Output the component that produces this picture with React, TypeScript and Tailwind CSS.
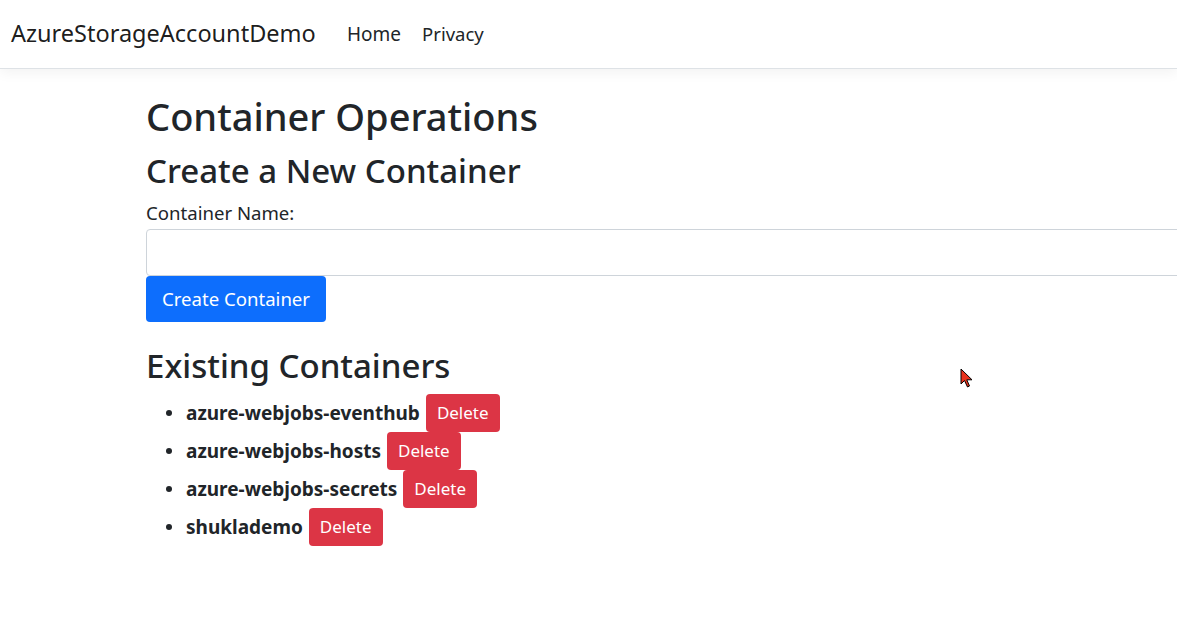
import React from "react";

const containers = ["azure-webjobs-eventhub", "azure-webjobs-hosts", "azure-webjobs-secrets", "shukla" + "demo"];

function Cursor() {
  return (
    <svg className="absolute left-[960px] top-[368px]" width="14" height="21" viewBox="0 0 14 21">
      <path d="M1 1 L1 16 L4.5 12.5 L7.5 19 L9.5 18 L6.8 11.8 L12 11.8 Z" fill="#e8321c" stroke="#000" strokeWidth="1" />
    </svg>
  );
}

export default function App() {
  return (
    <div className="relative w-full h-[622px] overflow-hidden bg-white text-[#212529]" style={{ fontFamily: '"Segoe UI", "Noto Sans", sans-serif' }}>
      <nav className="h-[69px] flex items-center border-b border-[#dee2e6] shadow-[0_4px_12px_rgba(0,0,0,0.05)] bg-white">
        <span className="ml-[11px] w-[305px] whitespace-nowrap text-[23.5px] text-black/90">AzureStorageAccountDemo</span>
        <a className="ml-[31px] text-[19px] text-[#212529]">Home</a>
        <a className="ml-[21px] text-[18.5px] text-[#212529]">Privacy</a>
      </nav>
      <main className="pl-[146px] pt-[22px]">
        <h1 className="text-[38px] leading-[50px] font-medium mb-[9px]">Container Operations</h1>
        <h2 className="text-[33px] leading-[41px] font-medium mb-[9px]">Create a New Container</h2>
        <label className="block text-[18.6px] leading-[26px] mb-[3px]">Container Name:</label>
        <input className="block w-[1100px] h-[47px] border border-[#ced4da] rounded-[4px] px-3 outline-none" />
        <button className="mt-[0px] h-[46px] w-[180px] rounded-[4px] bg-[#0d6efd] text-white text-[18.6px]">Create Container</button>
        <h2 className="mt-[23px] text-[33px] leading-[41px] font-medium mb-[8px]">Existing Containers</h2>
        <ul>
          {containers.map((name) => (
            <li key={name} className="flex items-center h-[38px]">
              <span className="ml-[20px] w-[6px] h-[6px] rounded-full bg-[#212529]" />
              <strong className="ml-[14px] text-[19px] font-bold">{name}</strong>
              <button className="ml-[6px] h-[38px] px-[11px] rounded-[4px] bg-[#dc3545] text-white text-[17px]">Delete</button>
            </li>
          ))}
        </ul>
      </main>
      <Cursor />
    </div>
  );
}
